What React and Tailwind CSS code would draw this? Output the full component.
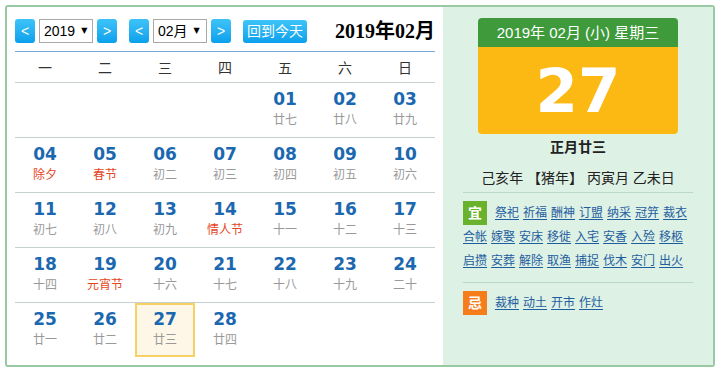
const weekdays = ['一', '二', '三', '四', '五', '六', '日'];

const lunar = {
  1: '廿七', 2: '廿八', 3: '廿九', 4: '除夕', 5: '春节', 6: '初二', 7: '初三',
  8: '初四', 9: '初五', 10: '初六', 11: '初七', 12: '初八', 13: '初九', 14: '情人节',
  15: '十一', 16: '十二', 17: '十三', 18: '十四', 19: '元宵节', 20: '十六', 21: '十七',
  22: '十八', 23: '十九', 24: '二十', 25: '廿一', 26: '廿二', 27: '廿三', 28: '廿四',
};
const festivals = [4, 5, 14, 19];

const yi = ['祭祀', '祈福', '酬神', '订盟', '纳采', '冠笄', '裁衣', '合帐', '嫁娶', '安床', '移徙', '入宅', '安香', '入殓', '移柩', '启攒', '安葬', '解除', '取渔', '捕捉', '伐木', '安门', '出火'];
const ji = ['裁种', '动土', '开市', '作灶'];

const cjk = "font-['Liberation_Sans','Noto_Sans_CJK_SC',sans-serif]";

function NavButton({ children }) {
  return (
    <div className="w-[20px] h-[24px] rounded-[3px] bg-gradient-to-b from-[#3cc4f8] to-[#08a0ec] text-white text-[14px] leading-[24px] text-center">
      {children}
    </div>
  );
}

function FakeSelect({ value }) {
  return (
    <div className="w-[54px] h-[24px] border border-[#a9a9a9] bg-white flex items-center pl-[4px] text-[14px] text-black">
      <span>{value}</span>
      <span className="ml-[6px] text-[8px] leading-none font-['DejaVu_Sans',sans-serif]">▼</span>
    </div>
  );
}

function buildWeeks() {
  const cells = [null, null, null, null];
  for (let d = 1; d <= 28; d++) cells.push(d);
  while (cells.length % 7) cells.push(null);
  const weeks = [];
  for (let i = 0; i < cells.length; i += 7) weeks.push(cells.slice(i, i + 7));
  return weeks;
}

function DayCell({ day }) {
  if (!day) return <div className="h-[54px]" />;
  const today = day === 27;
  const red = festivals.includes(day);
  return (
    <div
      className={
        today
          ? 'h-[54px] border-2 border-[#f8d165] bg-[#fef7e8] pt-[4px] text-center'
          : 'h-[54px] pt-[6px] text-center'
      }
    >
      <div className="text-[17px] leading-[20px] font-bold text-[#1b68b0] font-['DejaVu_Sans',sans-serif]">
        {String(day).padStart(2, '0')}
      </div>
      <div className={`mt-[1px] text-[12px] leading-[20px] ${red ? 'text-[#e6461e]' : 'text-[#999]'}`}>
        {lunar[day]}
      </div>
    </div>
  );
}

function Badge({ label, color }) {
  return (
    <span className={`w-[24px] h-[24px] mr-[4px] text-white text-[14px] font-bold leading-[24px] text-center ${color}`}>
      {label}
    </span>
  );
}

function Links({ words }) {
  return words.map((w) => (
    <a key={w} href="#" className="h-[24px] leading-[24px] text-[12px] text-[#1e5e9f] underline underline-offset-2">
      {w}
    </a>
  ));
}

export default function App() {
  const weeks = buildWeeks();

  return (
    <div className={`p-[5px] bg-white ${cjk}`}>
      <div className="w-[710px] h-[362px] border-2 border-[#98c9a3] rounded-[3px] flex overflow-hidden bg-white">
        {/* Left: month grid */}
        <div className="w-[436px] px-[8px] pt-[12px]">
          <div className="flex items-center h-[24px]">
            <div className="flex items-center gap-[4px]">
              <NavButton>&lt;</NavButton>
              <FakeSelect value="2019" />
              <NavButton>&gt;</NavButton>
            </div>
            <div className="flex items-center gap-[4px] ml-[12px]">
              <NavButton>&lt;</NavButton>
              <FakeSelect value="02月" />
              <NavButton>&gt;</NavButton>
            </div>
            <div className="ml-[12px] h-[23px] px-[4px] rounded-[3px] bg-gradient-to-b from-[#3cc4f8] to-[#08a0ec] text-white text-[14px] leading-[23px]">
              回到今天
            </div>
            <div className="ml-auto text-[20px] font-bold text-black font-['Liberation_Serif','Noto_Sans_CJK_SC',serif]">
              2019年02月
            </div>
          </div>

          <div className="mt-[8px] border-t border-[#79a8e0]">
            <div className="grid grid-cols-7 h-[31px] border-b border-[#c8cfd0] items-center">
              {weekdays.map((w) => (
                <div key={w} className="text-center text-[14px] text-[#333] pt-[2px]">{w}</div>
              ))}
            </div>
            {weeks.map((week, i) => (
              <div
                key={i}
                className={`grid grid-cols-7 ${i < weeks.length - 1 ? 'border-b border-[#c8cfd0]' : ''}`}
              >
                {week.map((d, j) => (
                  <DayCell key={j} day={d} />
                ))}
              </div>
            ))}
          </div>
        </div>

        {/* Right: day detail */}
        <div className="flex-1 bg-[#def1e5] px-[20px] pt-[11px]">
          <div className="w-[200px] mx-auto rounded-[4px] overflow-hidden">
            <div className="h-[29px] bg-[#3e9a3b] text-white text-[15px] leading-[29px] text-center">
              2019年 02月 (小) 星期三
            </div>
            <div className="h-[87px] bg-[#fdb913] text-white text-[61px] leading-[87px] font-bold text-center font-['DejaVu_Sans',sans-serif]">
              27
            </div>
          </div>
          <div className="h-[26px] leading-[26px] text-center text-[14px] font-bold text-[#222]">正月廿三</div>
          <div className="mt-[6px] leading-[24px] text-center text-[14px] text-[#222]">
            己亥年 【猪年】 丙寅月 乙未日
          </div>
          <div className="mt-[2px] border-t border-[#b8d9c3] pt-[8px] pb-[9px] flex flex-wrap gap-x-[4px] items-center">
            <Badge label="宜" color="bg-[#69b22d]" />
            <Links words={yi} />
          </div>
          <div className="border-t border-[#b8d9c3] pt-[8px] flex flex-wrap gap-x-[4px] items-center">
            <Badge label="忌" color="bg-[#f67d1c]" />
            <Links words={ji} />
          </div>
        </div>
      </div>
    </div>
  );
}
